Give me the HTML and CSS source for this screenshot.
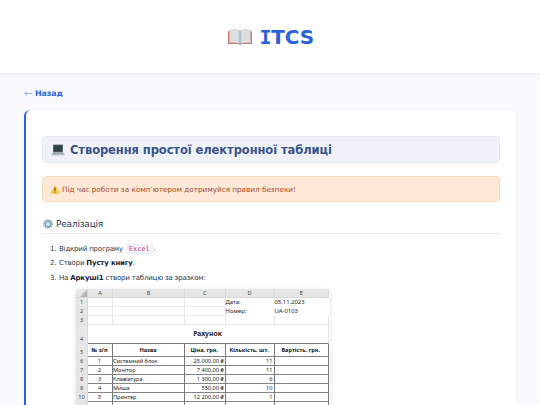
FILE: index.html
```html
<!DOCTYPE html>
<html lang="uk">
<head>
<meta charset="utf-8">
<title>ITCS</title>
<link rel="stylesheet" href="styles.css">
</head>
<body>
<header class="site-header">
  <svg class="book" viewBox="0 0 24 18"><path d="M0 3.5l1-.5h22l1 .5V16H14l-2 1-2-1H0z" fill="#cf7a74"/><path d="M1.6 2q5.6-1.6 10.4.8Q16.800 .4 22.400 2v12.800q-5.800-1-10.400 1-4.600-2-10.400-1z" fill="#e2e5e4" stroke="#b4bcbd" stroke-width=".4"/><path d="M12 2.500v13.500" stroke="#6f929f" stroke-width=".8"/><path d="M10.600 2.500v12.500M13.400 2.500v12.500" stroke="#bdd3da" stroke-width=".9"/><path d="M3 4h6M3 6h6M3 8h6M3 10h6M3 12h6M15 4h6M15 6h6M15 8h6M15 10h6M15 12h6" stroke="#c7caca" stroke-width=".7" stroke-dasharray="1.5 .6"/></svg>
  <h1 class="brand"><span class="brand-i">I</span>TCS</h1>
</header>
<main class="page">
  <a class="back"><svg class="arrow" viewBox="0 0 9 8"><path d="M8.500 4.500H.8M3 2.700L.8 4.500 3 6.300" fill="none" stroke="#6b91e8" stroke-width=".7"/></svg><span>Назад</span></a>
  <article class="card">
    <h2 class="title">
      <svg class="laptop" viewBox="0 0 14 12"><rect x="2" y=".5" width="10" height="8" rx=".6" fill="#6d7679"/><rect x="2.800" y="1.300" width="8.400" height="6.300" fill="#2b4347"/><path d="M2 8.600h10l1.800 2.100H.2z" fill="#98a3aa"/><path d="M.2 10.600h13.600v.8H.2z" fill="#c4ccd1"/></svg>
      <span>Створення простої електронної таблиці</span>
    </h2>
    <p class="warning">
      <svg class="sign" viewBox="0 0 10 9"><path d="M5 .7L9.300 8.200H.7z" fill="#fcc83c" stroke="#f3b934" stroke-width=".6" stroke-linejoin="round"/><path d="M5 2.800v3M5 6.600v1" stroke="#493c27" stroke-width="1"/></svg>
      <span>Під час роботи за комп’ютером дотримуйся правил безпеки!</span>
    </p>
    <h3 class="section">
      <svg class="gear" viewBox="0 0 10 10"><circle cx="5" cy="5" r="4.200" fill="none" stroke="#6f9fb9" stroke-width="1.300" stroke-dasharray="1.200 1"/><circle cx="5" cy="5" r="2.800" fill="none" stroke="#6f9fb9" stroke-width="1.700"/><circle cx="5" cy="5" r=".8" fill="#6f9fb9"/></svg>
      <span>Реалізація</span>
    </h3>
    <ol class="steps">
      <li><span class="n">1.</span><span>Відкрий програму</span> <code>Excel</code>.</li>
      <li><span class="n">2.</span><span>Створи <b>Пусту книгу</b>.</span></li>
      <li><span class="n">3.</span><span>На <b>Аркуші1</b> створи таблицю за зразком:</span></li>
    </ol>
    <div class="shot">
      <table class="sheet">
        <colgroup><col class="c0"><col class="ca"><col class="cb"><col class="cc"><col class="cd"><col class="ce"></colgroup>
        <tr><th><svg class="corner" viewBox="0 0 7 7"><path d="M7 0v7H0z" fill="#b5b5b5"/></svg></th><th>A</th><th>B</th><th>C</th><th>D</th><th>E</th></tr>
        <tr><th>1</th><td></td><td></td><td></td><td class="plain">Дата:</td><td class="plain">05.11.2023</td></tr>
        <tr><th>2</th><td></td><td></td><td></td><td class="plain">Номер:</td><td class="plain">UA-0103</td></tr>
        <tr><th>3</th><td></td><td></td><td></td><td></td><td></td></tr>
        <tr class="invoice"><th>4</th><td colspan="5">Рахунок</td></tr>
        <tr class="heads"><th>5</th><td>№ з/п</td><td>Назва</td><td>Ціна, грн.</td><td>Кількість, шт.</td><td>Вартість, грн.</td></tr>
        <tr class="item"><th>6</th><td>1</td><td>Системний блок</td><td>25 000,00 ₴</td><td>11</td><td></td></tr>
        <tr class="item"><th>7</th><td>2</td><td>Монітор</td><td>7 400,00 ₴</td><td>11</td><td></td></tr>
        <tr class="item"><th>8</th><td>3</td><td>Клавіатура</td><td>1 300,00 ₴</td><td>6</td><td></td></tr>
        <tr class="item"><th>9</th><td>4</td><td>Миша</td><td>550,00 ₴</td><td>10</td><td></td></tr>
        <tr class="item"><th>10</th><td>5</td><td>Принтер</td><td>12 200,00 ₴</td><td>1</td><td></td></tr>
        <tr class="item"><th></th><td></td><td></td><td></td><td></td><td></td></tr>
      </table>
    </div>
  </article>
</main>
</body>
</html>
```

FILE: styles.css
```css
* { box-sizing: border-box; }
body { margin: 0; height: 405px; overflow: hidden; background: #f9fafc; color: #29364a; font-family: "DejaVu Sans", sans-serif; font-size: 7px; }
h1, h2, h3, p, ol { margin: 0; padding: 0; }
svg { display: block; flex: none; }
.site-header { height: 73px; display: flex; align-items: center; justify-content: center; gap: 8px; background: #fff; box-shadow: 0 1px 3px rgba(30, 45, 70, .1); }
.book { width: 24px; height: 18px; }
.brand { width: 53px; font-size: 20px; line-height: 24px; color: #2962dc; white-space: nowrap; letter-spacing: -.2px; }
.brand-i { font-family: "DejaVu Sans Mono", monospace; }
.page { height: 332px; overflow: hidden; padding: 14px 24px 0; }
.back { height: 12px; display: flex; align-items: center; gap: 2px; color: #2962dc; font-size: 7.9px; font-weight: bold; }
.back span { letter-spacing: -.1px; }
.arrow { width: 9px; height: 8px; }
.card { height: 295px; overflow: hidden; margin-top: 11px; padding: 26px 16px 0 16px; background: #fff; border-left: 2.5px solid #2962dc; border-radius: 6px 6px 0 0; box-shadow: 0 1px 5px rgba(30, 45, 70, .035); }
.title { height: 27px; display: flex; align-items: center; gap: 5px; padding-left: 8px; background: #eff3f9; border: 1px solid #e5eaf1; border-radius: 4px; font-size: 11.5px; letter-spacing: -.08px; color: #3a538d; white-space: nowrap; }
.laptop { width: 14px; height: 12px; }
.warning { height: 26px; margin-top: 13px; display: flex; align-items: center; gap: 2px; padding-left: 7px; background: #ffe8d5; border: 1px solid #f6dcbf; border-radius: 4px; color: #a8492a; font-size: 7.3px; letter-spacing: -.035px; white-space: nowrap; }
.sign { width: 10px; height: 9px; }
.section { height: 19px; margin-top: 13px; display: flex; align-items: center; gap: 3px; padding-left: 1px; padding-bottom: 1px; border-bottom: 1px solid #e6ebf1; font-size: 9px; letter-spacing: -.2px; font-weight: normal; }
.gear { width: 10px; height: 10px; }
.steps { list-style: none; padding: 8px 0 0 8px; }
.steps li { height: 14.4px; line-height: 14.4px; white-space: nowrap; display: flex; align-items: center; letter-spacing: -.18px; }
.n { width: 9px; }
.steps b { color: #172136; }
code { margin-left: 3px; margin-right: 1px; padding: 0 2px; height: 10px; line-height: 8.5px; border: 1px solid #eceff4; border-radius: 2px; background: #f3f5f9; color: #d83968; font-family: "DejaVu Sans Mono", monospace; font-size: 6.9px; letter-spacing: 0; }
.shot { width: 254px; height: 130px; margin: 4px 0 0 34px; overflow: hidden; border-radius: 4px; box-shadow: 0 1px 4px rgba(30, 40, 60, .16); background: #fff; }
.sheet { width: 253px; table-layout: fixed; border-collapse: separate; border-spacing: 0; color: #222; font-family: "Noto Sans", sans-serif; font-size: 5.6px; }
.c0 { width: 12px; } .ca { width: 25px; } .cb { width: 72px; } .cc { width: 40.5px; } .cd { width: 49px; } .ce { width: 54.5px; }
.sheet tr { height: 9.05px; }
.sheet th, .sheet td { height: 9.05px; padding: 0 1px 0 0; line-height: 8px; white-space: nowrap; font-weight: normal; border-right: .5px solid #e5e5e5; border-bottom: 1px solid #ececec; text-align: left; }
.sheet th { background: #e6e6e6; color: #444; text-align: center; border-color: #d8d8d8; padding: 0; vertical-align: bottom; }
.sheet tr + tr th { border-bottom-color: #e1e1e1; }
.sheet .plain { font-size: 5.9px; border-color: transparent; }
.corner { width: 7px; height: 7px; margin-left: 4px; }
.sheet .invoice td { height: 18.5px; text-align: center; font-weight: bold; font-size: 6.8px; border-bottom-color: #777; }
.sheet .heads td { height: 13.2px; text-align: center; font-weight: bold; color: #111; }
.sheet .heads td, .sheet .item td { border-right-color: #777; border-bottom-color: #858585; }
.sheet .item td:nth-child(2) { text-align: center; }
.sheet .item td:nth-child(4), .sheet .item td:nth-child(5) { text-align: right; }
```
